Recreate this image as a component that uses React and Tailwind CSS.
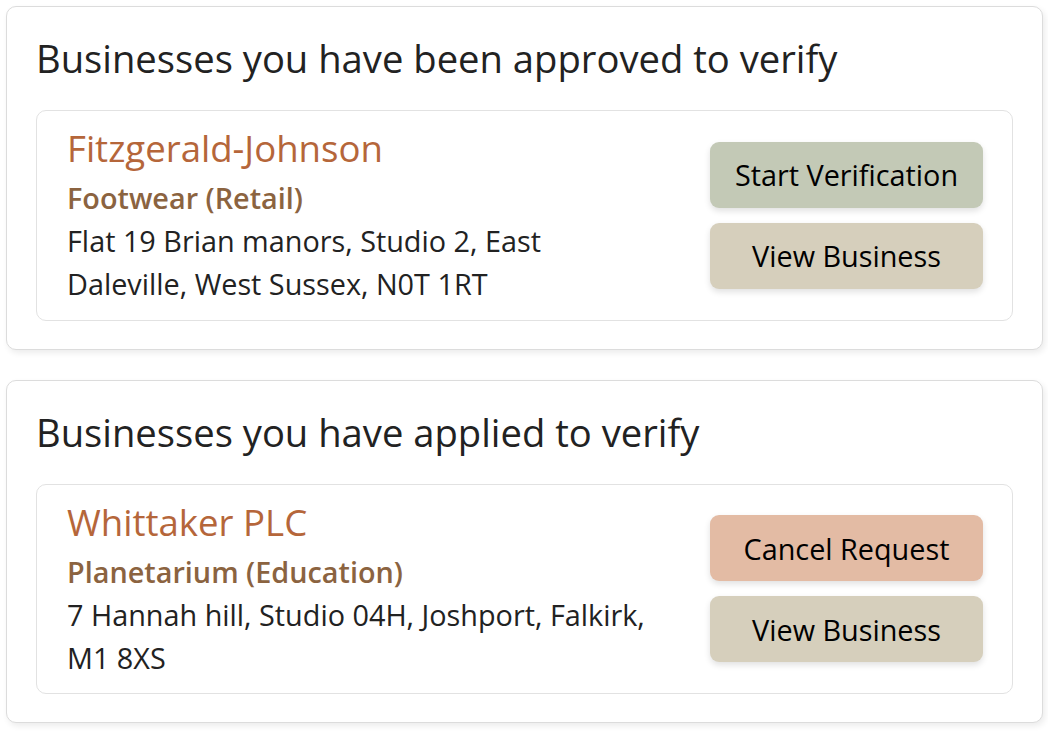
import React from "react";

const sections = [
  {
    title: "Businesses you have been approved to verify",
    items: [
      {
        name: "Fitzgerald-Johnson",
        category: "Footwear (Retail)",
        address: "Flat 19 Brian manors, Studio 2, East Daleville, West Sussex, N0T 1RT",
        primary: { label: "Start Verification", bg: "bg-[#c3c9b6]" },
      },
    ],
  },
  {
    title: "Businesses you have applied to verify",
    items: [
      {
        name: "Whittaker PLC",
        category: "Planetarium (Education)",
        address: "7 Hannah hill, Studio 04H, Joshport, Falkirk, M1 8XS",
        primary: { label: "Cancel Request", bg: "bg-[#e3bba4]" },
      },
    ],
  },
];

function BusinessCard({ item }) {
  return (
    <div className="flex items-center justify-between rounded-[10px] border border-[#e2e2e2] pl-[30px] pr-[29px] pt-[9px] pb-[14px]">
      <div className="w-[590px]">
        <h3 className="text-[36.6px] leading-[56px] text-[#b5663a]">{item.name}</h3>
        <p className="text-[28.8px] leading-[43.2px] font-semibold text-[#8b6340]">{item.category}</p>
        <p className="text-[28.8px] leading-[43.2px] text-[#222]">{item.address}</p>
      </div>
      <div className="mt-[5px] flex w-[273px] flex-col gap-[15px]">
        <button className={`h-[66px] rounded-[9px] ${item.primary.bg} text-[28.8px] text-black shadow-[0_3px_6px_rgba(0,0,0,0.12)]`}>
          {item.primary.label}
        </button>
        <button className="h-[66px] rounded-[9px] bg-[#d6cfbc] text-[28.8px] text-black shadow-[0_3px_6px_rgba(0,0,0,0.12)]">
          View Business
        </button>
      </div>
    </div>
  );
}

export default function App() {
  return (
    <div className="flex flex-col gap-[30px] bg-white pl-[6px] pr-[5px] pt-[6px] pb-[8px]" style={{ fontFamily: '"Open Sans", sans-serif' }}>
      {sections.map((s) => (
        <section key={s.title} className="rounded-[10px] border border-[#dcdcdc] bg-white px-[29px] pt-[28px] pb-[28px] shadow-[2px_3px_6px_rgba(0,0,0,0.08)]">
          <h2 className="mb-[29px] text-[38.2px] leading-[46px] text-[#222]">{s.title}</h2>
          {s.items.map((it) => (
            <BusinessCard key={it.name} item={it} />
          ))}
        </section>
      ))}
    </div>
  );
}
